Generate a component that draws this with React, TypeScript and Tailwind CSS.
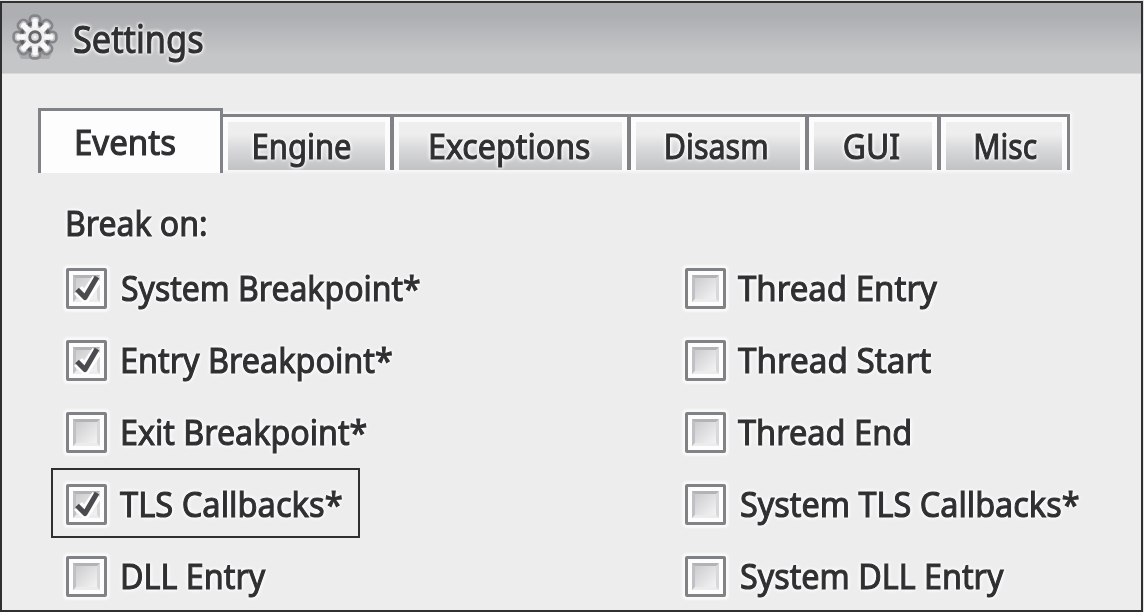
const halo =
  "[text-shadow:0_0_2px_#fff,0_0_3px_#fff,0_0_4px_#fff,0_0_5px_#fff,0_0_6px_#fff] [-webkit-text-stroke:1.1px_#303032]";

function Gear() {
  const teeth = [0, 45, 90, 135, 180, 225, 270, 315];
  return (
    <svg className="h-[48px] w-[46px] shrink-0 blur-[0.6px]" viewBox="0 0 46 48">
      <path d="M5 38 H41 L37 46 H9 Z" fill="#a9aaad" />
      {teeth.map((a) => (
        <rect key={a} x="17.8" y="2.6" width="10.4" height="14" rx="4" fill="#c6c7c9" stroke="#85868a" strokeWidth="2.6" transform={`rotate(${a} 23 24)`} />
      ))}
      <circle cx="23" cy="24" r="15" fill="#a9aaad" stroke="#7b7c7f" strokeWidth="1.6" />
      {teeth.map((a) => (
        <g key={a} transform={`rotate(${a} 23 24)`}>
          <rect x="20.2" y="5.5" width="5.6" height="13" rx="2" fill="#f8f8f8" />
          <circle cx="23" cy="10.5" r="2" fill="#5d5e61" transform="rotate(22.5 23 24)" />
        </g>
      ))}
      <circle cx="23" cy="24" r="10" fill="#f0f0f0" />
      <circle cx="23" cy="24" r="5.3" fill="#d9d9db" stroke="#66676a" strokeWidth="3" />
      <circle cx="23" cy="24" r="1.6" fill="#f4f4f4" />
    </svg>
  );
}

function Box({ checked }: { checked?: boolean }) {
  return (
    <span className="flex size-[41px] shrink-0 items-center justify-center rounded-[2px] border-3 border-[#818286] bg-[#fdfdfd] shadow-[0_0_2px_3px_#f9f9f9]">
      <span className="flex size-[27px] items-center justify-center border-3 border-t-[#b2b3b6] border-r-[#d8d8da] border-b-[#ececec] border-l-[#c0c1c4] bg-linear-to-br from-[#cbccce] to-[#f4f4f4] blur-[0.6px]">
        {checked && (
          <svg className="size-[27px] shrink-0 overflow-visible" viewBox="0 0 27 27">
            <path d="M5 15 L12 22 L24 4" fill="none" stroke="#fdfdfd" strokeWidth="11" />
            <path d="M4 14.5 L12 22.5 L24 2" fill="none" stroke="#4a4b4e" strokeWidth="5.2" strokeLinejoin="round" />
          </svg>
        )}
      </span>
    </span>
  );
}

function Option({ label, checked, fit }: { label: string; checked?: boolean; fit: string }) {
  return (
    <label className="flex h-[72px] items-center">
      <Box checked={checked} />
      <span className={`origin-left whitespace-nowrap ${fit} ${halo}`}>{label}</span>
    </label>
  );
}

function Tab({ label, className, fit }: { label: string; className: string; fit: string }) {
  return (
    <div className={`flex h-[56px] shrink-0 border-t-3 border-[#818286] bg-[#fcfcfc] px-[5px] pt-[5px] ${className}`}>
      <div className="flex h-[48px] w-full items-center justify-center bg-linear-to-b from-[#eeeeee] from-25% via-[#d8d9db] via-55% to-[#c1c2c4]">
        <span className={`whitespace-nowrap ${fit} ${halo}`}>{label}</span>
      </div>
    </div>
  );
}

export default function App() {
  return (
    <div className="h-[612px] w-[1144px] overflow-hidden bg-[#e4e4e4] pt-px pr-px font-['Noto_Sans',sans-serif] text-[35px] leading-[48px] text-[#303032]">
      <div className="h-[611px] w-[1143px] border-2 border-[#303032] bg-[#ededed]">
        <header className="flex h-[71px] items-center border-b border-[#d8d8d9] bg-linear-to-b from-[#aeafb2] from-20% to-[#c5c6c8] to-75% pl-[10px]">
          <div className="flex pb-[3px]">
            <Gear />
          </div>
          <h1 className={`ml-[15px] origin-left scale-x-[0.88] text-[39px] leading-[54px] ${halo}`}>Settings</h1>
        </header>
        <nav className="mt-[34px] ml-[36px] flex h-[66px]">
          <div className="z-10 flex h-[65px] w-[185px] shrink-0 items-center justify-center border-x-3 border-t-3 border-[#818286] bg-[#fdfdfd] pr-[10px]">
            <span className={`scale-x-[0.945] ${halo}`}>Events</span>
          </div>
          <div className="mt-[6px] flex h-[56px] shadow-[0_0_3px_2px_#fafafa]">
            <Tab label="Engine" className="w-[171px] border-r-4" fit="scale-x-[0.884] mr-[9px]" />
            <Tab label="Exceptions" className="w-[237px] border-r-4" fit="scale-x-[0.92] mr-[3px]" />
            <Tab label="Disasm" className="w-[178px] border-r-4" fit="scale-x-[0.87] mr-[3px]" />
            <Tab label="GUI" className="w-[132px] border-r-4" fit="scale-x-[0.91] mr-[4px]" />
            <Tab label="Misc" className="w-[129px] border-r-3" fit="scale-x-[0.86] ml-[2px]" />
          </div>
        </nav>
        <main className="pl-[63px]">
          <h2 className={`mt-[25px] h-[53px] w-fit origin-left scale-x-[0.915] ${halo}`}>Break on:</h2>
          <div className="flex">
            <div className="w-[620px] pl-px">
              <Option label="System Breakpoint*" checked fit="ml-[14px] scale-x-[0.914]" />
              <Option label="Entry Breakpoint*" checked fit="ml-[13px] scale-x-[0.925]" />
              <Option label="Exit Breakpoint*" fit="ml-[13px] scale-x-[0.921]" />
              <div className="relative">
                <Option label="TLS Callbacks*" checked fit="ml-[13px] scale-x-[0.933]" />
                <div className="absolute top-0 -left-[15px] h-[70px] w-[309px] border-2 border-[#303032]" />
              </div>
              <Option label="DLL Entry" fit="ml-[13px] scale-x-[0.923]" />
            </div>
            <div>
              <Option label="Thread Entry" fit="ml-[12px] scale-x-[0.943]" />
              <Option label="Thread Start" fit="ml-[12px] scale-x-[0.95]" />
              <Option label="Thread End" fit="ml-[12px] scale-x-[0.93]" />
              <Option label="System TLS Callbacks*" fit="ml-[14px] scale-x-[0.926]" />
              <Option label="System DLL Entry" fit="ml-[14px] scale-x-[0.923]" />
            </div>
          </div>
        </main>
      </div>
    </div>
  );
}
